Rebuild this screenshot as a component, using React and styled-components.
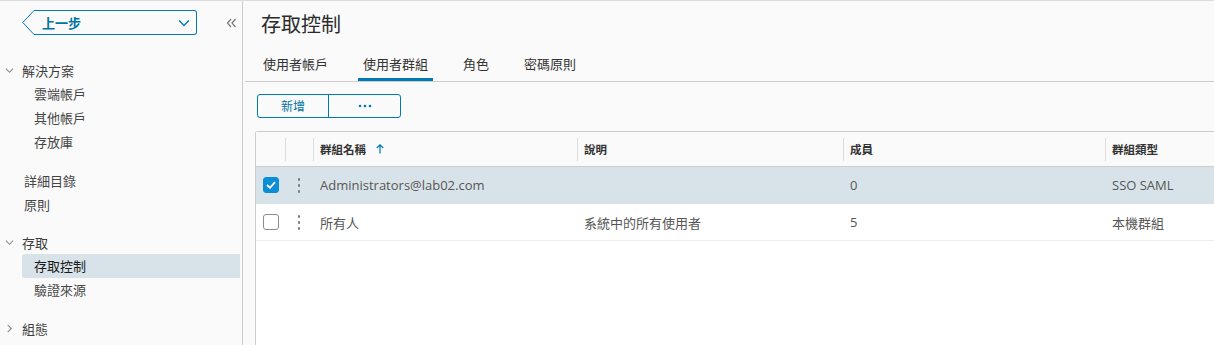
import React from "react";
import styled, { createGlobalStyle } from "styled-components";

const GlobalStyle = createGlobalStyle`
  html, body {
    margin: 0;
    padding: 0;
    background: #fafafa;
  }
  body {
    font-family: "Open Sans", "Noto Sans CJK TC", sans-serif;
    color: #454545;
  }
  * { box-sizing: border-box; }
`;

const Page = styled.div`
  display: flex;
  height: 345px;
  border-top: 1px solid #dcdcdc;
  overflow: hidden;
`;

/* ---------- sidebar ---------- */
const Sidebar = styled.aside`
  width: 243px;
  flex-shrink: 0;
  border-right: 1px solid #cccccc;
  display: flex;
  flex-direction: column;
`;

const SidebarTop = styled.div`
  display: flex;
  align-items: center;
  padding: 9px 0 0 22px;
  gap: 29px;
`;

const BackButton = styled.div`
  display: flex;
  width: 175px;
  height: 25px;
  cursor: pointer;
`;

const BackBody = styled.div`
  flex: 1;
  display: flex;
  align-items: center;
  justify-content: space-between;
  border: 1px solid #0079b8;
  border-left: none;
  border-radius: 0 3px 3px 0;
  padding: 0 6px 0 8px;
  font-size: 13px;
  font-weight: 700;
  color: #0072a3;
`;

const Tree = styled.nav`
  margin-top: 23px;
  display: flex;
  flex-direction: column;
`;

const Group = styled.div`
  display: flex;
  flex-direction: column;
  margin-bottom: ${(p) => (p.$gap ? p.$gap : 14)}px;
`;

const GroupHead = styled.div`
  display: flex;
  align-items: center;
  height: 24px;
  font-size: 13px;
  color: #3d3d3d;
  padding-left: 5px;
  gap: 8px;
`;

const NavItem = styled.div`
  height: 24px;
  line-height: 24px;
  font-size: 13px;
  margin-left: ${(p) => (p.$top ? 24 : 22)}px;
  margin-right: 2px;
  padding-left: ${(p) => (p.$top ? 0 : 12)}px;
  border-radius: 3px 0 0 3px;
  color: ${(p) => (p.$active ? "#1a1a1a" : "#454545")};
  background: ${(p) => (p.$active ? "#d8e3e9" : "transparent")};
`;

/* ---------- main ---------- */
const Main = styled.main`
  flex: 1;
  min-width: 0;
  display: flex;
  flex-direction: column;
  padding-left: 2px;
  overflow: hidden;
`;

const Title = styled.h1`
  margin: 12px 0 0 16px;
  font-size: 20px;
  line-height: 24px;
  font-weight: 400;
  color: #2b2b2b;
`;

const TabBar = styled.div`
  margin-top: 8px;
  display: flex;
  gap: 25px;
  padding-left: 13px;
  border-bottom: 1px solid #cccccc;
`;

const Tab = styled.div`
  height: 36px;
  padding: 9px 5px 0;
  font-size: 13px;
  line-height: 20px;
  color: #333;
  border-bottom: 3px solid ${(p) => (p.$active ? "#0079b8" : "transparent")};
`;

const Actions = styled.div`
  display: flex;
  margin: 12px 0 0 12px;
  width: 144px;
  height: 24px;
  border: 1px solid #0079b8;
  border-radius: 3px;
`;

const ActionBtn = styled.div`
  width: ${(p) => p.$w}px;
  display: flex;
  align-items: center;
  justify-content: center;
  font-size: 12px;
  color: #0072a3;
  & + & {
    border-left: 1px solid #0079b8;
  }
`;

const Table = styled.div`
  margin: 13px 0 0 10px;
  flex: 1;
  width: 1000px;
  background: #ffffff;
  border-top: 1px solid #cccccc;
  border-left: 1px solid #cccccc;
  border-top-left-radius: 3px;
`;

const cols = "29px 28px 264px 266px 262px 140px";

const HeadRow = styled.div`
  display: grid;
  grid-template-columns: ${cols};
  height: 35px;
  background: #fafafa;
  border-bottom: 1px solid #cccccc;
`;

const HeadCell = styled.div`
  display: flex;
  align-items: center;
`;

const HeadLabel = styled.div`
  flex: 1;
  height: 23px;
  display: flex;
  align-items: center;
  gap: 10px;
  padding-left: 6px;
  border-left: 1px solid #dddddd;
  font-size: 11.5px;
  font-weight: 700;
  color: #333;
`;

const Row = styled.div`
  display: grid;
  grid-template-columns: ${cols};
  height: 37px;
  background: ${(p) => (p.$selected ? "#d8e3e9" : "#ffffff")};
  border-bottom: 1px solid ${(p) => (p.$selected ? "#d8e3e9" : "#eeeeee")};
`;

const Cell = styled.div`
  display: flex;
  align-items: center;
  justify-content: ${(p) => (p.$center ? "center" : "flex-start")};
  padding-left: ${(p) => (p.$center ? 0 : 7)}px;
  font-size: 13px;
  color: #565656;
  white-space: nowrap;
`;

const Checkbox = styled.span`
  width: 16px;
  height: 16px;
  border-radius: 3px;
  display: flex;
  align-items: center;
  justify-content: center;
  background: ${(p) => (p.$checked ? "#0b8ed6" : "#ffffff")};
  border: 1px solid ${(p) => (p.$checked ? "#0b8ed6" : "#8c8c8c")};
`;

const Kebab = styled.span`
  display: flex;
  flex-direction: column;
  gap: 3px;
  span {
    width: 2px;
    height: 3px;
    background: #7a7a7a;
    border-radius: 1px;
  }
`;

const ChevronDown = ({ color = "#8c8c8c", size = 9 }) => (
  <svg width={size} height={size} viewBox="0 0 10 10">
    <path d="M1 3 L5 7 L9 3" fill="none" stroke={color} strokeWidth="1.2" />
  </svg>
);

const ChevronRight = () => (
  <svg width="9" height="9" viewBox="0 0 10 10">
    <path d="M3 1 L7 5 L3 9" fill="none" stroke="#8c8c8c" strokeWidth="1.2" />
  </svg>
);

const groups = [
  { head: "解決方案", open: true, items: ["雲端帳戶", "其他帳戶", "存放庫"], gap: 15 },
  { top: ["詳細目錄", "原則"], gap: 13 },
  { head: "存取", open: true, items: ["存取控制", "驗證來源"], active: "存取控制", gap: 14 },
  { head: "組態", open: false, items: [] },
];

const rows = [
  { name: "Administrators@lab02.com", desc: "", members: "0", type: "SSO SAML", selected: true },
  { name: "所有人", desc: "系統中的所有使用者", members: "5", type: "本機群組", selected: false },
];

export default function App() {
  return (
    <>
      <GlobalStyle />
      <Page>
        <Sidebar>
          <SidebarTop>
            <BackButton>
              <svg width="12" height="25" viewBox="0 0 12 25">
                <path d="M12 0.5 L0.8 12.5 L12 24.5" fill="none" stroke="#0079b8" strokeWidth="1" />
              </svg>
              <BackBody>
                <span>上一步</span>
                <ChevronDown color="#0079b8" size={12} />
              </BackBody>
            </BackButton>
            <svg width="11" height="10" viewBox="0 0 11 10">
              <path d="M5 1 L1.5 5 L5 9 M9.5 1 L6 5 L9.5 9" fill="none" stroke="#777" strokeWidth="1.2" />
            </svg>
          </SidebarTop>
          <Tree>
            {groups.map((g, i) => (
              <Group key={i} $gap={g.gap}>
                {g.head && (
                  <GroupHead>
                    {g.open ? <ChevronDown /> : <ChevronRight />}
                    <span>{g.head}</span>
                  </GroupHead>
                )}
                {g.items &&
                  g.items.map((it) => (
                    <NavItem key={it} $active={g.active === it}>
                      {it}
                    </NavItem>
                  ))}
                {g.top &&
                  g.top.map((it) => (
                    <NavItem key={it} $top>
                      {it}
                    </NavItem>
                  ))}
              </Group>
            ))}
          </Tree>
        </Sidebar>

        <Main>
          <Title>存取控制</Title>
          <TabBar>
            <Tab>使用者帳戶</Tab>
            <Tab $active>使用者群組</Tab>
            <Tab>角色</Tab>
            <Tab>密碼原則</Tab>
          </TabBar>
          <Actions>
            <ActionBtn $w={70}>新增</ActionBtn>
            <ActionBtn $w={72}>
              <svg width="14" height="4" viewBox="0 0 14 4">
                <circle cx="2" cy="2" r="1.3" fill="#0079b8" />
                <circle cx="7" cy="2" r="1.3" fill="#0079b8" />
                <circle cx="12" cy="2" r="1.3" fill="#0079b8" />
              </svg>
            </ActionBtn>
          </Actions>
          <Table>
            <HeadRow>
              <HeadCell />
              <HeadCell>
                <HeadLabel />
              </HeadCell>
              <HeadCell>
                <HeadLabel>
                  群組名稱
                  <svg width="8" height="10" viewBox="0 0 8 10">
                    <path d="M4 9.5 V1 M0.8 4 L4 0.8 L7.2 4" fill="none" stroke="#0079b8" strokeWidth="1.2" />
                  </svg>
                </HeadLabel>
              </HeadCell>
              <HeadCell>
                <HeadLabel>說明</HeadLabel>
              </HeadCell>
              <HeadCell>
                <HeadLabel>成員</HeadLabel>
              </HeadCell>
              <HeadCell>
                <HeadLabel>群組類型</HeadLabel>
              </HeadCell>
            </HeadRow>
            {rows.map((r) => (
              <Row key={r.name} $selected={r.selected}>
                <Cell>
                  <Checkbox $checked={r.selected}>
                    {r.selected && (
                      <svg width="10" height="8" viewBox="0 0 10 8">
                        <path d="M1 4 L4 6.8 L9 1.2" fill="none" stroke="#fff" strokeWidth="1.8" />
                      </svg>
                    )}
                  </Checkbox>
                </Cell>
                <Cell $center>
                  <Kebab>
                    <span />
                    <span />
                    <span />
                  </Kebab>
                </Cell>
                <Cell>{r.name}</Cell>
                <Cell>{r.desc}</Cell>
                <Cell>{r.members}</Cell>
                <Cell>{r.type}</Cell>
              </Row>
            ))}
          </Table>
        </Main>
      </Page>
    </>
  );
}
